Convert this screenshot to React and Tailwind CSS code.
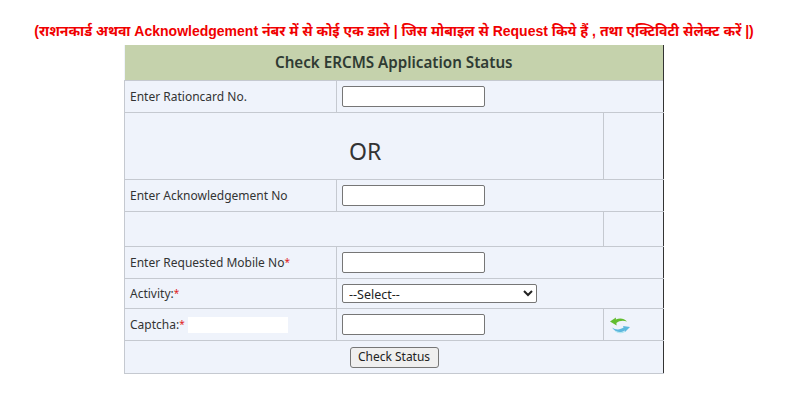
import React from "react";

const cell = "border border-[#c5c9d0] px-[5px] align-middle";
const last = "border-r-[#333]";
const label = "text-[12px] text-[#333] pt-[2px]";

function Req() {
  return <span className="text-[#e02020] text-[10px] align-[1px] leading-none">*</span>;
}

function TextBox() {
  return <input type="text" className="block w-[143px] h-[21px] bg-white border border-[#767676] rounded-[2px]" />;
}

function RefreshIcon() {
  return (
    <svg width="22" height="20" viewBox="0 0 22 20" className="mt-[1px]">
      <path d="M1 6.5 L7 2.5 L6.8 4.6 C10.5 2.6 15 3 18 6.6 C14.5 5.2 10.5 5.4 7.4 8 L7.6 10.5 Z" fill="#62bd2f" />
      <path d="M3 12.5 C6.5 15 11 15 14.6 12.6 L14 11 L21 12 L16 17 L15.8 15.4 C12 18 6.5 17.8 3 12.5 Z" fill="#5cb8de" />
      <path d="M5 15 C8.5 18 13 18 16 15.8 L15.8 17 C12 19 8 18.6 5 15 Z" fill="#a6e4ee" />
    </svg>
  );
}

export default function App() {
  return (
    <div className="w-[796px] h-[409px] bg-white pt-[22px] font-['Noto_Sans',sans-serif]">
      <p className="h-[23px] pr-[8px] text-center text-[14px] leading-[18px] font-bold text-[#f00000] font-['Liberation_Sans','Noto_Sans',sans-serif] whitespace-nowrap">
        (राशनकार्ड अथवा Acknowledgement नंबर में से कोई एक डाले | जिस मोबाइल से Request किये हैं , तथा एक्टिविटी सेलेक्ट करें |)
      </p>
      <table className="ml-[124px] w-[539px] table-fixed border-collapse bg-[#eff3fb]">
        <colgroup>
          <col className="w-[212px]" />
          <col className="w-[267px]" />
          <col className="w-[60px]" />
        </colgroup>
        <tbody>
          <tr className="h-[35px]">
            <td colSpan={3} className="bg-[#c5d2ac] text-center text-[15.2px] font-semibold text-[#2f3b33] border-r border-[#333]">
              Check ERCMS Application Status
            </td>
          </tr>
          <tr className="h-[32px]">
            <td className={`${cell} ${label}`}>Enter Rationcard No.</td>
            <td colSpan={2} className={`${cell} ${last}`}><TextBox /></td>
          </tr>
          <tr className="h-[67px]">
            <td colSpan={2} className={`${cell} text-[23px] text-[#333] pl-[224px] pt-[11px]`}>OR</td>
            <td className={`${cell} ${last}`}></td>
          </tr>
          <tr className="h-[32px]">
            <td className={`${cell} ${label}`}>Enter Acknowledgement No</td>
            <td colSpan={2} className={`${cell} ${last}`}><TextBox /></td>
          </tr>
          <tr className="h-[35px]">
            <td colSpan={2} className={cell}></td>
            <td className={`${cell} ${last}`}></td>
          </tr>
          <tr className="h-[32px]">
            <td className={`${cell} ${label}`}>Enter Requested Mobile No<Req /></td>
            <td colSpan={2} className={`${cell} ${last}`}><TextBox /></td>
          </tr>
          <tr className="h-[30px]">
            <td className={`${cell} ${label}`}>Activity:<Req /></td>
            <td colSpan={2} className={`${cell} ${last}`}>
              <select className="block w-[195px] h-[19px] bg-white border border-[#767676] rounded-[2px] text-[12.5px] text-[#222] pl-[2px]">
                <option>--Select--</option>
              </select>
            </td>
          </tr>
          <tr className="h-[32px]">
            <td className={`${cell} ${label}`}>
              <div className="flex items-center">
                <span>Captcha:<Req /></span>
                <div className="ml-[3px] w-[100px] h-[16px] bg-white" />
              </div>
            </td>
            <td className={cell}><TextBox /></td>
            <td className={`${cell} ${last}`}><RefreshIcon /></td>
          </tr>
          <tr className="h-[33px]">
            <td colSpan={3} className={`${cell} ${last} text-center pb-[2px]`}>
              <button className="h-[21px] w-[89px] bg-[#efefef] border border-[#767676] rounded-[3px] text-[12px] text-[#222]">
                Check Status
              </button>
            </td>
          </tr>
        </tbody>
      </table>
    </div>
  );
}
